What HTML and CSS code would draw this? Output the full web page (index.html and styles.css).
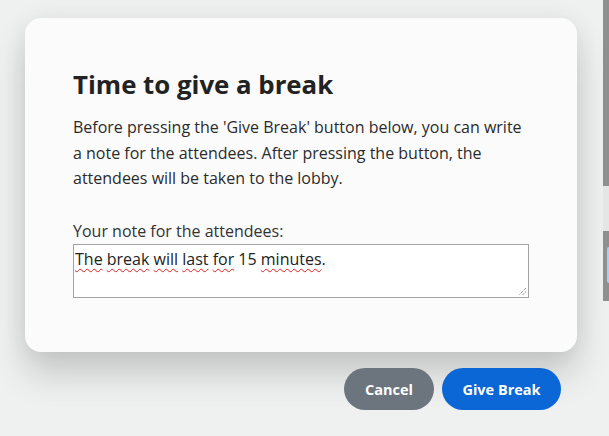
FILE: index.html
```html
<!DOCTYPE html>
<html lang="en">
<head>
<meta charset="utf-8">
<title>Time to give a break</title>
<link rel="stylesheet" href="styles.css">
</head>
<body>
<div class="page">
  <section class="dialog">
    <h1 class="title">Time to give a break</h1>
    <p class="intro">Before pressing the 'Give Break' button below, you can write<br>a note for the attendees. After pressing the button, the<br>attendees will be taken to the lobby.</p>
    <label class="label" for="note">Your note for the attendees:</label>
    <div class="note" id="note" contenteditable="true" role="textbox" aria-multiline="true"><span class="sp">The</span> <span class="sp">break</span> <span class="sp">will</span> <span class="sp">last</span> <span class="sp">for</span> 15 <span class="sp">minutes</span>.<svg class="grip" width="9" height="9" viewBox="0 0 9 9"><path d="M8 1 L1 8 M8 4.5 L4.5 8" stroke="#6b6b6b" stroke-width="1" stroke-dasharray="1 1" fill="none"/></svg></div>
  </section>
  <div class="actions">
    <button class="btn btn-cancel" type="button">Cancel</button>
    <button class="btn btn-primary" type="button">Give Break</button>
  </div>
</div>
<div class="edge">
  <div class="edge-top"></div>
  <div class="edge-gap"></div>
  <div class="edge-mid"><div class="edge-pill"></div></div>
</div>
</body>
</html>
```

FILE: styles.css
```css
html, body {
  margin: 0;
  padding: 0;
}
body {
  background: #eff0f0;
  font-family: "Open Sans", "Lato", sans-serif;
  width: 609px;
  height: 436px;
  overflow: hidden;
}
.page {
  padding: 18px 0 0 25px;
  width: 552px;
}
.dialog {
  background: #fbfbfb;
  border-radius: 16px;
  height: 334px;
  box-sizing: border-box;
  padding: 49px 48px 0 48px;
  box-shadow: 0 22px 34px rgba(0, 0, 0, 0.17), 0 0 24px rgba(0, 0, 0, 0.06);
}
.title {
  margin: 0;
  font-size: 25.8px;
  line-height: 34px;
  font-weight: 700;
  color: #222222;
}
.intro {
  margin: 14px 0 0;
  font-size: 16px;
  line-height: 25.6px;
  color: #2b2b2b;
  font-weight: 400;
}
.label {
  display: block;
  margin-top: 29px;
  font-size: 16px;
  line-height: 20px;
  color: #333333;
}
.note {
  position: relative;
  box-sizing: border-box;
  width: 456px;
  height: 54px;
  margin-top: 3px;
  border: 1px solid #a3a3a3;
  background: #ffffff;
  padding: 4px 1px;
  font-size: 16px;
  line-height: 20px;
  color: #222222;
  outline: none;
}
.sp {
  text-decoration: underline wavy #e02020;
  text-decoration-thickness: 1px;
  text-underline-offset: 3px;
}
.grip {
  position: absolute;
  right: 1px;
  bottom: 1px;
}
.actions {
  display: flex;
  justify-content: flex-end;
  gap: 8px;
  margin-top: 16px;
  padding-right: 16px;
}
.btn {
  height: 42px;
  border: none;
  border-radius: 21px;
  color: #ffffff;
  font-family: "Open Sans", sans-serif;
  font-weight: 700;
  font-size: 14.5px;
  padding: 0 8px;
}
.btn-cancel {
  background: #6c757d;
  width: 90px;
}
.btn-primary {
  background: #0b66d6;
  width: 119px;
}
.edge {
  position: fixed;
  top: 0;
  right: 0;
  width: 6px;
  height: 436px;
  display: flex;
  flex-direction: column;
}
.edge-top {
  height: 186px;
  background: #8f8f8f;
}
.edge-gap {
  height: 45px;
  background: #e4e6e6;
}
.edge-mid {
  height: 70px;
  background: #8f8f8f;
  padding-top: 16px;
  box-sizing: border-box;
  display: flex;
  justify-content: flex-end;
}
.edge-pill {
  width: 2px;
  height: 36px;
  background: #a8d0f5;
  border-radius: 2px 0 0 2px;
}
```
